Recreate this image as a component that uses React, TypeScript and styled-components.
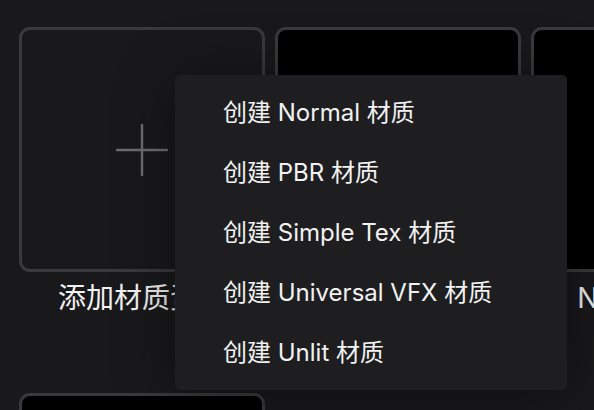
/* React */
import React from 'react'

/* Modules */
import styled, { createGlobalStyle } from 'styled-components'

/* Constants */
const COLORS = {
  background: '#19191b',
  menu: '#1e1e20',
  border: '#3a3a3c',
  plus: '#6e6e70',
  text: '#f2f2f2',
  black: '#000000'
}

const FONT = `'Inter', 'Noto Sans CJK SC', sans-serif`

const GlobalStyle = createGlobalStyle`
  html, body {
    margin: 0;
    padding: 0;
    background: ${COLORS.background};
    overflow: hidden;
  }
  * { box-sizing: border-box; }
`

/* Styled components */
const Page = styled.main`
  position: relative;
  width: 594px;
  height: 410px;
  overflow: hidden;
  background: ${COLORS.background};
  font-family: ${FONT};
`

const Grid = styled.section`
  display: grid;
  grid-template-columns: repeat(3, 246px);
  grid-auto-rows: 286px;
  column-gap: 10px;
  row-gap: 80px;
  padding: 27px 0 0 19px;
  width: max-content;
`

const Item = styled.div`
  display: flex;
  flex-direction: column;
  align-items: center;
`

const Card = styled.div<{ $filled?: boolean }>`
  width: 246px;
  height: 245px;
  flex: none;
  border: 3px solid ${COLORS.border};
  border-radius: 11px;
  background: ${p => (p.$filled ? COLORS.black : 'transparent')};
  display: flex;
  align-items: center;
  justify-content: center;
`

const Label = styled.span`
  margin-top: 11px;
  line-height: 30px;
  font-size: 28px;
  color: ${COLORS.text};
  white-space: nowrap;
`

const Menu = styled.ul`
  position: absolute;
  left: 175px;
  top: 75px;
  width: 392px;
  margin: 0;
  padding: 5px 0 10px 0;
  list-style: none;
  background: ${COLORS.menu};
  border-radius: 5px;
  box-shadow: 0 4px 60px rgba(0, 0, 0, 0.45);
`

const MenuItem = styled.li`
  height: 60px;
  display: flex;
  align-items: center;
  padding-left: 48px;
  font-size: 24px;
  color: ${COLORS.text};
  white-space: nowrap;
  cursor: pointer;
`

const PlusIcon = () => (
  <svg width='52' height='52' viewBox='0 0 52 52'>
    <path d='M26 1 V51 M1 26 H51' stroke={COLORS.plus} strokeWidth='2.4' strokeLinecap='round' fill='none' />
  </svg>
)

const MATERIALS = ['Normal', 'PBR', 'Simple Tex', 'Universal VFX', 'Unlit']

export default function App() {
  return (
    <Page>
      <GlobalStyle />
      <Grid>
        <Item>
          <Card><PlusIcon /></Card>
          <Label>添加材质资源</Label>
        </Item>
        <Item>
          <Card $filled />
        </Item>
        <Item>
          <Card $filled />
          <Label>Normal_012</Label>
        </Item>
        <Item>
          <Card $filled />
        </Item>
      </Grid>

      <Menu>
        {MATERIALS.map(name =>
          <MenuItem key={name}>创建 {name} 材质</MenuItem>
        )}
      </Menu>
    </Page>
  )
}
